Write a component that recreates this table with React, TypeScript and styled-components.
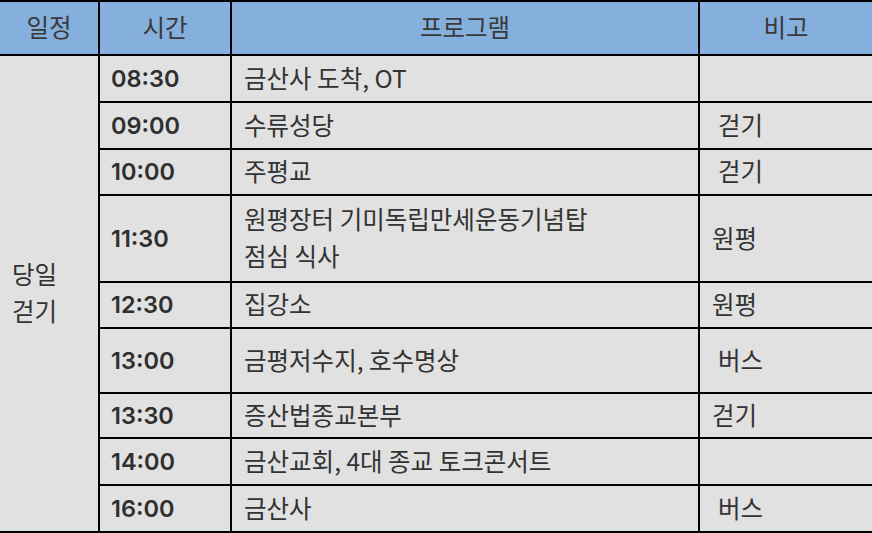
import React from "react";
import styled, { createGlobalStyle } from "styled-components";

const GlobalStyle = createGlobalStyle`
  html, body {
    margin: 0;
    padding: 0;
    background: #ffffff;
  }
`;

interface ScheduleItem {
  time: string;
  program: string[];
  note?: string;
  noteIndent?: boolean;
}

const items: ScheduleItem[] = [
  { time: "08:30", program: ["금산사 도착, OT"] },
  { time: "09:00", program: ["수류성당"], note: "걷기", noteIndent: true },
  { time: "10:00", program: ["주평교"], note: "걷기", noteIndent: true },
  {
    time: "11:30",
    program: ["원평장터 기미독립만세운동기념탑", "점심 식사"],
    note: "원평",
  },
  { time: "12:30", program: ["집강소"], note: "원평" },
  { time: "13:00", program: ["금평저수지, 호수명상"], note: "버스", noteIndent: true },
  { time: "13:30", program: ["증산법종교본부"], note: "걷기" },
  { time: "14:00", program: ["금산교회, 4대 종교 토크콘서트"] },
  { time: "16:00", program: ["금산사"], note: "버스", noteIndent: true },
];

const Table = styled.div`
  display: grid;
  grid-template-columns: 98px 130px 466px 1fr;
  grid-template-rows: 52px 45px 45px 44px 85px 44px 63px 43px 45px 45px;
  gap: 2px;
  padding: 2px 0;
  width: 872px;
  height: 533px;
  box-sizing: border-box;
  background: #000;
  font-family: "Noto Sans CJK KR", "Noto Sans", sans-serif;
  color: #333;
`;

const Cell = styled.div`
  display: flex;
  align-items: center;
  background: #e1e1e1;
  font-size: 24.5px;
  box-sizing: border-box;
  padding-bottom: 3px;
`;

const HeadCell = styled(Cell)`
  justify-content: center;
  background: #85afdc;
  color: #3a3a3a;
`;

const DayCell = styled(Cell)`
  grid-row: 2 / span 9;
  padding-left: 12px;
`;

const TimeCell = styled(Cell)`
  padding-left: 11px;
  padding-bottom: 1px;
  font-family: Inter, "Noto Sans", sans-serif;
  font-weight: 600;
  font-size: 23.5px;
  color: #2f2f2f;
`;

const ProgramCell = styled(Cell)`
  padding-left: 12px;
  white-space: pre;
`;

const NoteCell = styled(Cell)<{ $indent?: boolean }>`
  padding-left: ${(p) => (p.$indent ? 18 : 12)}px;
`;

const Lines = styled.div`
  display: flex;
  flex-direction: column;

  & > span {
    display: block;
    height: 37px;
    line-height: 37px;
  }
`;

export default function App() {
  return (
    <>
      <GlobalStyle />
      <Table>
        <HeadCell>일정</HeadCell>
        <HeadCell>시간</HeadCell>
        <HeadCell>프로그램</HeadCell>
        <HeadCell>비고</HeadCell>
        <DayCell>
          <Lines>
            <span>당일</span>
            <span>걷기</span>
          </Lines>
        </DayCell>
        {items.map((item) => (
          <React.Fragment key={item.time}>
            <TimeCell>{item.time}</TimeCell>
            <ProgramCell>
              <Lines>
                {item.program.map((line) => (
                  <span key={line}>{line}</span>
                ))}
              </Lines>
            </ProgramCell>
            <NoteCell $indent={item.noteIndent}>{item.note ?? ""}</NoteCell>
          </React.Fragment>
        ))}
      </Table>
    </>
  );
}
